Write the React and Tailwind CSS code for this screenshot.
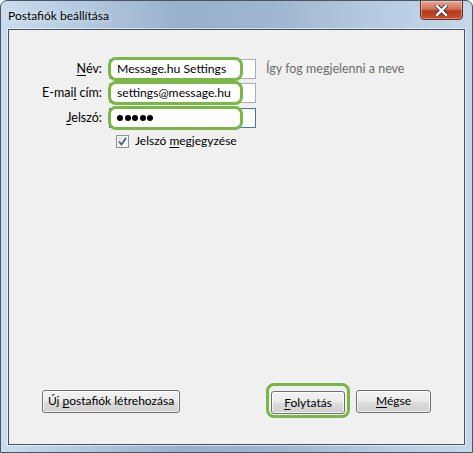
import { useState } from "react";

const font = { fontFamily: 'Lato, "Noto Sans", sans-serif' };

function U({ children }) {
  return <span className="underline underline-offset-2">{children}</span>;
}

function Highlight({ className }) {
  return (
    <span
      className={`pointer-events-none absolute rounded-[8px] border-[3px] border-[#7ab648] ${className}`}
    />
  );
}

function Field({ label, children, value, hint, focused }) {
  return (
    <div className="flex h-[20px] items-center">
      <label className="w-[94px] pr-[1px] text-right text-[12.5px] text-black">{label}</label>
      <div
        className={`relative ml-[6px] h-[20px] w-[147px] border bg-white ${
          focused ? "border-[#3d7bad] border-t-[#3d7bad]" : "border-[#abadb3] border-t-[#abadb3]"
        }`}
      >
        <Highlight className="-left-[2px] -top-[3px] h-[24px] w-[135px] bg-white" />
        <div className="relative flex h-full items-center pl-[7px] text-[12.2px] leading-none text-black">
          {children ?? value}
        </div>
      </div>
      {hint && <span className="ml-[10px] text-[12.5px] text-[#6d6d6d]">{hint}</span>}
    </div>
  );
}

function WinButton({ children, className = "" }) {
  return (
    <button
      type="button"
      className={`relative h-[23px] rounded-[3px] border border-[#707070] bg-[linear-gradient(180deg,#f2f2f2_0%,#ebebeb_48%,#dddddd_52%,#cfcfcf_100%)] text-[12px] text-black shadow-[inset_0_0_0_1px_rgba(255,255,255,0.75)] ${className}`}
    >
      {children}
    </button>
  );
}

export default function App() {
  const [remember, setRemember] = useState(true);

  return (
    <div
      style={font}
      className="flex h-[453px] w-[473px] flex-col overflow-hidden rounded-t-[7px] border border-[#4a5563] bg-[linear-gradient(90deg,#cadcef_0%,#b9cfe4_12%,#98b1cb_38%,#9eb6cf_58%,#b8cde2_82%,#c5d8eb_100%)]"
    >
      {/* title bar */}
      <div className="relative flex h-[28px] shrink-0 items-start">
        <span className="ml-[7px] mt-[6px] text-[12px] text-black [text-shadow:0_0_6px_rgba(255,255,255,0.9)]">
          Postafiók beállítása
        </span>
        <div className="absolute right-[9px] top-[-1px] flex h-[20px] w-[43px] items-center justify-center rounded-b-[4px] border border-[#6b2a1e] bg-[linear-gradient(180deg,#e8a493_0%,#d2705a_45%,#b8381e_55%,#c8502e_100%)] shadow-[inset_0_0_0_1px_rgba(255,255,255,0.35)]">
          <svg width="13" height="11" viewBox="0 0 13 11">
            <path
              d="M2 1 L11 10 M11 1 L2 10"
              stroke="#3a3a3a"
              strokeWidth="4.2"
              strokeLinecap="square"
            />
            <path d="M2 1 L11 10 M11 1 L2 10" stroke="#ffffff" strokeWidth="2.4" strokeLinecap="square" />
          </svg>
        </div>
      </div>

      {/* client area */}
      <div className="mx-[7px] mb-[7px] flex flex-1 flex-col border border-[#46535f] bg-[#f0f0f0] shadow-[0_0_0_1px_rgba(255,255,255,0.55)]">
        <div className="mt-[29px] flex flex-col">
          <Field label={<><U>N</U>év:</>} value="Message.hu Settings" hint="Így fog megjelenni a neve" />
          <div className="mt-[4px]">
            <Field label={<>E-mai<U>l</U> cím:</>} value="settings@message.hu" />
          </div>
          <div className="mt-[5px]">
            <Field label={<><U>J</U>elszó:</>} focused>
              <span className="flex gap-[1.5px]">
                {[0, 1, 2, 3, 4].map((i) => (
                  <span key={i} className="h-[6px] w-[6px] rounded-full bg-black" />
                ))}
              </span>
            </Field>
          </div>
          <label className="ml-[107px] mt-[6px] flex h-[14px] items-center text-[12px] text-black">
            <span
              onClick={() => setRemember(!remember)}
              className="flex h-[13px] w-[13px] items-center justify-center border border-[#8e8f8f] bg-[linear-gradient(135deg,#dcdcdc_0%,#f5f5f5_60%,#ffffff_100%)] shadow-[inset_0_0_0_1px_#f4f4f4]"
            >
              {remember && (
                <svg width="9" height="9" viewBox="0 0 9 9">
                  <path d="M1 4.5 L3.5 7.5 L8 1" fill="none" stroke="#4a5f7e" strokeWidth="1.8" />
                </svg>
              )}
            </span>
            <span className="ml-[6px]">
              Jelszó <U>m</U>egjegyzése
            </span>
          </label>
        </div>

        <div className="mt-auto mb-[30px] flex items-center">
          <WinButton className="ml-[33px] w-[138px]">
            Új <U>p</U>ostafiók létrehozása
          </WinButton>
          <div className="relative ml-auto">
            <WinButton className="w-[74px]">
              <U>F</U>olytatás
            </WinButton>
            <Highlight className="-left-[5px] -top-[6px] h-[35px] w-[84px]" />
          </div>
          <WinButton className="ml-[11px] mr-[33px] w-[75px]">
            <U>M</U>égse
          </WinButton>
        </div>
      </div>
    </div>
  );
}
